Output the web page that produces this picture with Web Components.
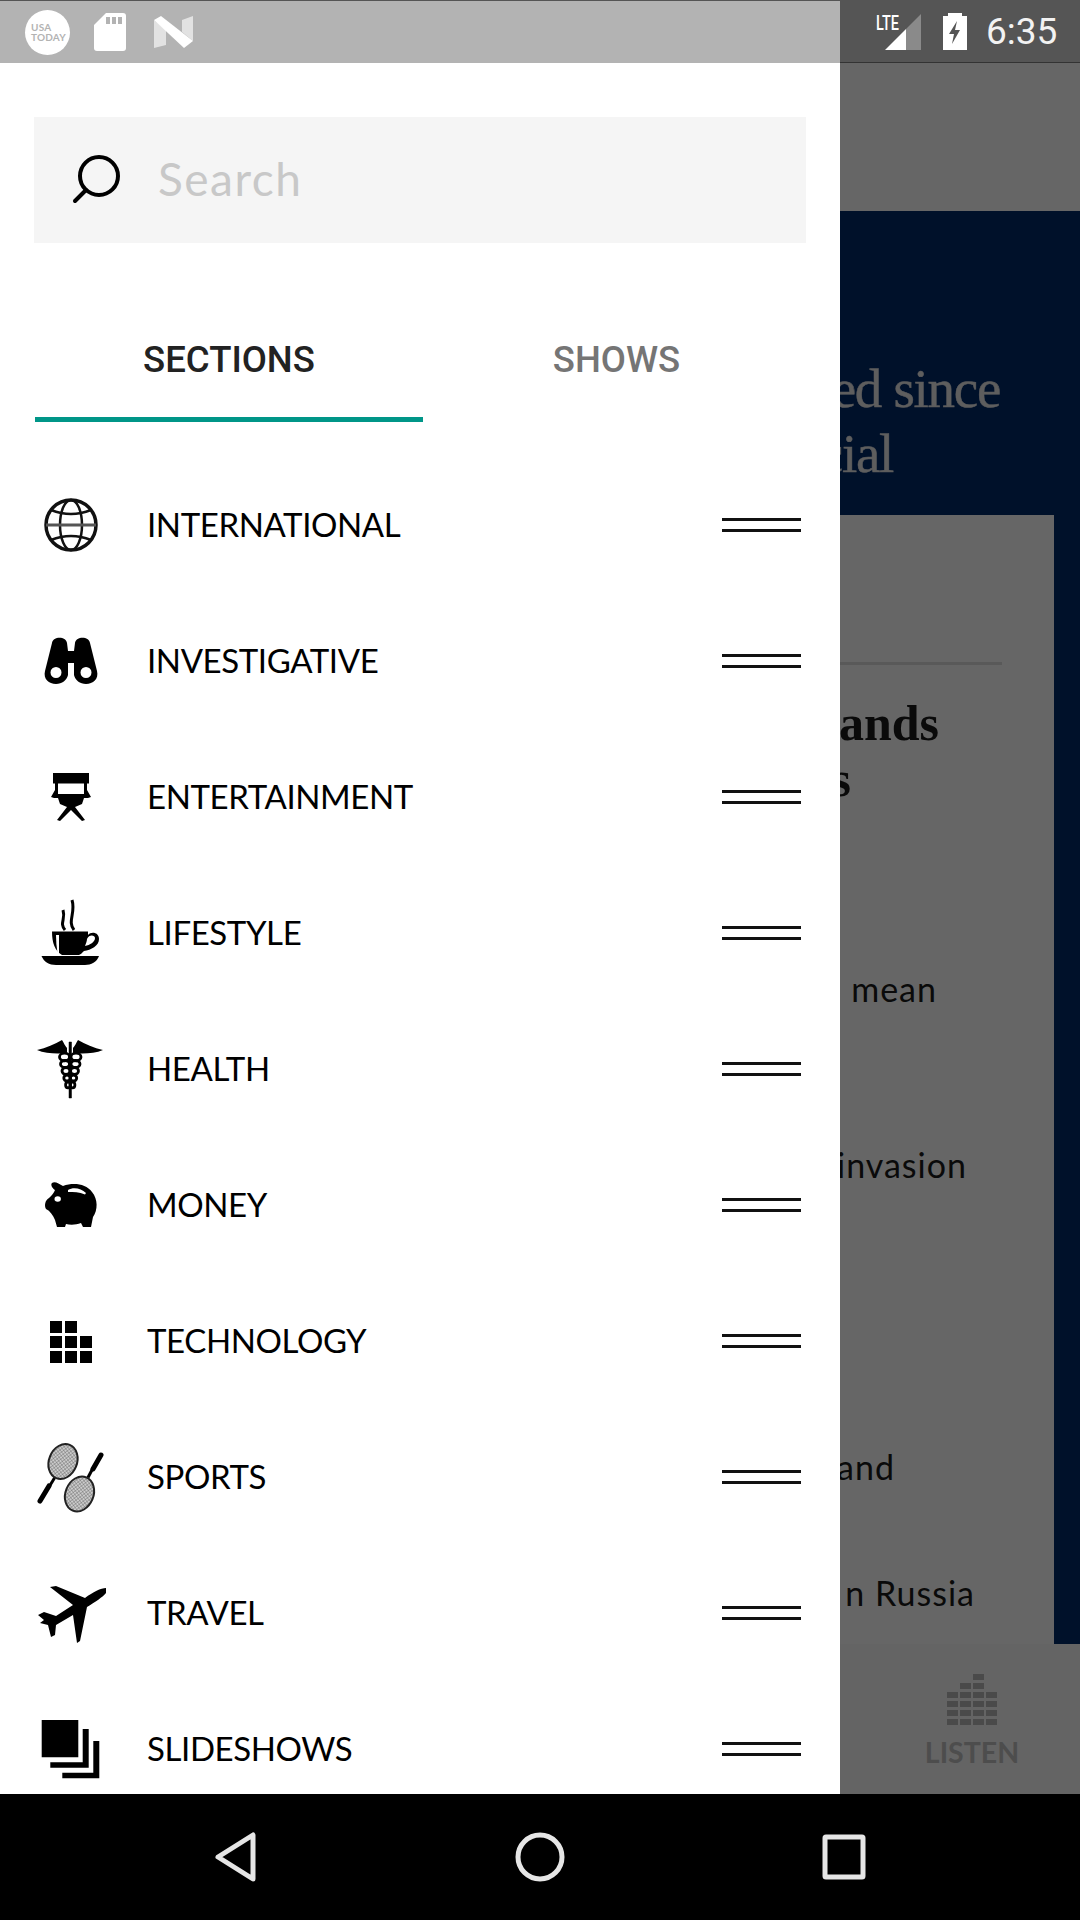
<!DOCTYPE html>
<html>
<head>
<meta charset="utf-8">
<style>
  html, body { margin: 0; background: #000; }
  body { font-family: "Lato", "Liberation Sans", sans-serif; }
  #screen { display: flex; flex-direction: column; width: 1080px; height: 1920px; overflow: hidden; }
  #middle { display: flex; height: 1731px; }
</style>
</head>
<body>
<div id="screen">
  <status-bar></status-bar>
  <div id="middle">
    <app-drawer>
      <section-row>
        <svg slot="icon" width="80" height="80" viewBox="0 0 80 80" fill="none" stroke="#111">
          <circle cx="40" cy="40" r="25" stroke-width="3.500"/>
          <ellipse cx="40" cy="40" rx="11" ry="25" stroke-width="2.500"/>
          <path d="M15 40H65" stroke-width="3" stroke="#555"/>
          <path d="M20 25Q40 33 60 25M20 55Q40 47 60 55" stroke-width="2.500"/>
        </svg>
        INTERNATIONAL
      </section-row>
      <section-row>
        <svg slot="icon" width="80" height="80" viewBox="0 0 80 80">
          <path fill-rule="evenodd" d="M21 22C22 15 35 15 36 22L37 30H43L44 22C45 15 58 15 59 22L66 50C68 58 62 63 55 63C49 63 44 59 43 54V42H37V54C36 59 31 63 25 63C18 63 12 58 14 50ZM25 46A5.500 5.500 0 1 0 25 57A5.500 5.500 0 1 0 25 46ZM55 46A5.500 5.500 0 1 0 55 57A5.500 5.500 0 1 0 55 46Z"/>
        </svg>
        INVESTIGATIVE
      </section-row>
      <section-row>
        <svg slot="icon" width="80" height="80" viewBox="0 0 80 80">
          <rect x="22" y="16" width="36" height="10.500"/>
          <path d="M24 26H27V37H53V26H56V33L60 40L57 41H53L51 47L44 50L54 63L51 64L40 53L29 64L26 63L36 50L29 47L27 41H23L20 40L24 33Z"/>
        </svg>
        ENTERTAINMENT
      </section-row>
      <section-row>
        <svg slot="icon" width="80" height="80" viewBox="0 0 80 80">
          <path d="M10.500 63H68C66 69 60 72 54 72H25C18 72 13 69 10.500 63Z"/>
          <path fill-rule="evenodd" d="M21 38.500H57V42C60 38 68 39 68 46C68 53 60 57 53 58C51 60 50 61 48 62H31C24 58 21 50 21 38.500ZM56 46C56 48 55 50 54 53C59 52 64 49 64 45C64 42 58 41 56 46Z"/>
          <path d="M25 42H28V60H26.500C25.500 54 25 48 25 42Z" fill="#fff"/>
          <path d="M34 37C28 30 35 26 32 17M43 37C36 28 45 20 41 7" fill="none" stroke="#000" stroke-width="3"/>
        </svg>
        LIFESTYLE
      </section-row>
      <section-row>
        <svg slot="icon" width="80" height="80" viewBox="0 0 80 80">
          <path d="M6 21C15 19 24 15 31 11C33 14 34 17 36 19V24C28 25 15 25 6 21ZM72 21C63 19 54 15 47 11C45 14 44 17 42 19V24C50 25 63 25 72 21Z"/>
          <path d="M38 13H40.500V69H38Z" stroke="#000" stroke-width=".5"/>
          <g fill="none" stroke="#000" stroke-width="2.800">
            <ellipse cx="33.500" cy="28" rx="5" ry="3.800"/>
            <ellipse cx="45" cy="28" rx="5" ry="3.800"/>
            <ellipse cx="34" cy="35" rx="4.500" ry="3.500"/>
            <ellipse cx="44.500" cy="35" rx="4.500" ry="3.500"/>
            <ellipse cx="35" cy="42" rx="4" ry="3.300"/>
            <ellipse cx="43.500" cy="42" rx="4" ry="3.300"/>
            <ellipse cx="36" cy="49" rx="3.200" ry="3"/>
            <ellipse cx="42.500" cy="49" rx="3.200" ry="3"/>
            <ellipse cx="37" cy="56" rx="2.400" ry="2.800"/>
            <ellipse cx="41.500" cy="56" rx="2.400" ry="2.800"/>
          </g>
        </svg>
        HEALTH
      </section-row>
      <section-row>
        <svg slot="icon" width="80" height="80" viewBox="0 0 80 80">
          <path d="M21 18C24 16 28 19 32 21C43 17 55 19 61 27C67 34 67 45 62 52L60 62H52L50 58C45 60 39 60 35 59L34 62H26L24 55C22 50 19 46 15 44C13 41 14 35 18 33C21 30 23 28 24 25C22 24 19 20 21 18Z"/>
          <ellipse cx="26.700" cy="34" rx="3.200" ry="2.800" fill="#fff"/>
          <path d="M37 25C42 22 50 23 55 28L54 29.500C48 27 43 27 37 27Z" fill="#fff"/>
        </svg>
        MONEY
      </section-row>
      <section-row>
        <svg slot="icon" width="80" height="80" viewBox="0 0 80 80">
          <path d="M19 20H31V32H19ZM34 20H46V32H34ZM19 35H31V47H19ZM34 35H46V47H34ZM49 35H61V47H49ZM19 50H31V62H19ZM34 50H46V62H34ZM49 50H61V62H49Z"/>
        </svg>
        TECHNOLOGY
      </section-row>
      <section-row>
        <svg slot="icon" width="80" height="80" viewBox="0 0 80 80">
          <defs>
            <pattern id="mesh" width="2.600" height="2.600" patternUnits="userSpaceOnUse" patternTransform="rotate(30)">
              <rect width="2.600" height="2.600" fill="#ccc"/>
              <path d="M0 0H2.600M0 0V2.600" stroke="#666" stroke-width=".8"/>
            </pattern>
          </defs>
          <ellipse cx="32" cy="24.500" rx="14" ry="18" transform="rotate(22 32 24.500)" fill="url(#mesh)" stroke="#222" stroke-width="2"/>
          <ellipse cx="48.500" cy="57" rx="14" ry="18" transform="rotate(22 48.500 57)" fill="url(#mesh)" stroke="#222" stroke-width="2"/>
          <path d="M23.500 41L18 50" stroke="#000" stroke-width="3"/>
          <path d="M18 49L9 64" stroke="#000" stroke-width="5" stroke-linecap="round"/>
          <path d="M57 40.500L62 31" stroke="#000" stroke-width="3"/>
          <path d="M62 32L70 18" stroke="#000" stroke-width="5" stroke-linecap="round"/>
        </svg>
        SPORTS
      </section-row>
      <section-row>
        <svg slot="icon" width="80" height="80" viewBox="0 0 80 80">
          <path d="M75 15C70 15 62 19 54 25L25 13L19 14L42 32L25 43L13 39L7 42L13 47L9 50L17 52L20 64L24 62L25 52L42 42L46 70L49 68L56 34C64 29 72 24 75 20Z"/>
        </svg>
        TRAVEL
      </section-row>
      <section-row>
        <svg slot="icon" width="80" height="80" viewBox="0 0 80 80">
          <path d="M10.700 11H47.300V48.300H10.700ZM51.700 20H57.700V58.700H19.300V53.300H51.700ZM62.300 32H68.300V69.300H31.300V63.700H62.300Z"/>
        </svg>
        SLIDESHOWS
      </section-row>
    </app-drawer>
    <news-peek></news-peek>
  </div>
  <nav-bar></nav-bar>
</div>

<script>
/**
 * Small helper, every element below has its markup in an open shadow root
 */
class ShadowElement extends HTMLElement {
    constructor() {
        super();
        this.attachShadow({ mode: 'open' });
    }

    connectedCallback() {
        this.shadowRoot.innerHTML = this.markup();
    }
}

class StatusBar extends ShadowElement {
    markup() {
        return `
        <style>
            :host { display: flex; height: 63px; flex: none; background: #555; border-top: 1px solid #555; box-sizing: border-box; }
            .left { display: flex; align-items: center; width: 840px; background: #b3b3b3; padding-left: 25px; gap: 24px; box-sizing: border-box; }
            .usa {
                display: flex; flex-direction: column; justify-content: center; box-sizing: border-box;
                width: 45px; height: 45px; border-radius: 50%; background: #fff; padding-left: 6px;
                font: 700 10px/10px "Lato", sans-serif; letter-spacing: .2px; color: #b3b3b3;
            }
            .right { display: flex; flex: 1; align-items: center; padding-left: 36px; border-bottom: 1px solid #333; }
            .time { margin-left: 19px; font: 400 37px "Roboto", sans-serif; color: #f2f2f2; }
            svg { display: block; flex: none; }
        </style>
        <div class="left">
            <div class="usa"><span>USA</span><span>TODAY</span></div>
            <svg width="32" height="38" viewBox="0 0 32 38">
                <path d="M12 0H29C31 0 32 1 32 3V35C32 37 31 38 29 38H3C1 38 0 37 0 35V12Z" fill="#fff"/>
                <path d="M12 4H16V11H12ZM18 4H22V11H18ZM24 4H28V11H24Z" fill="#b3b3b3"/>
            </svg>
            <svg width="40" height="32" viewBox="0 0 40 32" style="margin-left:4px">
                <path d="M0 4L12 14V29L0 32Z" fill="#e2e2e2"/>
                <path d="M28 16V4L39 0V25Z" fill="#e2e2e2"/>
                <path d="M0 4L7 0L39 25L30 32Z" fill="#fff"/>
            </svg>
        </div>
        <div class="right">
            <svg width="46" height="38" viewBox="0 0 46 38">
                <text x="0" y="17" font-family="Roboto" font-weight="500" font-size="21" fill="#fff" textLength="23" lengthAdjust="spacingAndGlyphs">LTE</text>
                <path d="M9 37L30 16V37Z" fill="#fff"/>
                <path d="M30 16L45 1V37H30Z" fill="#8a8a8a"/>
            </svg>
            <svg width="24" height="37" viewBox="0 0 24 37" style="margin-left:21px">
                <path d="M5 0H19V3H24V37H0V3H5Z" fill="#fff"/>
                <path d="M14 8L6 21H11L9 31L17 17H12Z" fill="#555"/>
            </svg>
            <span class="time">6:35</span>
        </div>
        `;
    }
}

class SearchBox extends ShadowElement {
    markup() {
        return `
        <style>
            :host { display: flex; align-items: center; height: 126px; margin: 54px 34px 0; background: #f5f5f5; }
            svg { margin-left: 38px; flex: none; }
            span { margin-left: 36px; padding-bottom: 4px; font: 400 46px "Lato", sans-serif; letter-spacing: 1.500px; color: #c8c8c8; }
        </style>
        <svg width="50" height="50" viewBox="0 0 50 50" fill="none" stroke="#000" stroke-width="4" stroke-linecap="round">
            <circle cx="27" cy="21" r="19"/>
            <path d="M14 35L3 46"/>
        </svg>
        <span>Search</span>
        `;
    }
}

class DrawerTabs extends ShadowElement {
    markup() {
        return `
        <style>
            :host { display: grid; grid-template-columns: 388px 387px; margin-left: 35px; font: 500 36.500px "Roboto", sans-serif; }
            div { display: flex; align-items: center; justify-content: center; height: 179px; padding-top: 58px; box-sizing: border-box; border-bottom: 5px solid transparent; color: #757575; }
            .on { color: #222; border-bottom-color: #009688; }
        </style>
        <div class="on">SECTIONS</div>
        <div>SHOWS</div>
        `;
    }
}

class SectionRow extends ShadowElement {
    markup() {
        return `
        <style>
            :host { display: flex; flex: none; align-items: center; height: 136px; padding: 0 39px 0 31px; font: 400 33px "Lato", sans-serif; color: #000; }
            ::slotted(svg) { display: block; flex: none; }
            .label { flex: 1; margin-left: 36px; padding-bottom: 2px; white-space: nowrap; letter-spacing: -.4px; }
            .grip { flex: none; width: 79px; height: 14px; border-top: 3px solid #111; border-bottom: 3px solid #111; box-sizing: border-box; }
        </style>
        <slot name="icon"></slot>
        <div class="label"><slot></slot></div>
        <div class="grip"></div>
        `;
    }
}

class AppDrawer extends ShadowElement {
    markup() {
        return `
        <style>
            :host { display: block; flex: none; width: 840px; height: 1731px; overflow: hidden; background: #fff; }
            .list { display: flex; flex-direction: column; margin-top: 35px; }
        </style>
        <search-box></search-box>
        <drawer-tabs></drawer-tabs>
        <div class="list"><slot></slot></div>
        `;
    }
}

// what is left of the article on the right of the open drawer
class NewsPeek extends ShadowElement {
    markup() {
        const bars = [[0, 0, 1, 0], [0, 1, 1, 0], [1, 1, 1, 1], [1, 1, 1, 1], [1, 1, 1, 1], [1, 1, 1, 1]]
            .flat().map(on => `<i style="opacity:${on}"></i>`).join('');
        return `
        <style>
            :host { display: flex; flex-direction: column; flex: 1; min-width: 0; overflow: hidden; background: #666; }
            .appbar { height: 148px; flex: none; background: #666; }
            .hero { display: flex; flex-direction: column; align-items: flex-end; height: 304px; flex: none; background: #00112a; font: 400 55px/65px "Liberation Serif", serif; letter-spacing: -1.300px; -webkit-text-stroke: .5px #5e5e5e; color: #5e5e5e; }
            .hero div { white-space: nowrap; }
            .body { display: flex; flex: 1; min-height: 0; background: #00112a; }
            .card { display: flex; flex-direction: column; align-items: flex-end; flex: 1; min-width: 0; overflow: hidden; background: #666; font: 400 34px/40px "Lato", sans-serif; letter-spacing: 1px; color: #0a0a0a; }
            .card div { white-space: nowrap; }
            .rule { align-self: stretch; height: 3px; margin: 147px 52px 0 0; background: #595959; }
            .big { font: 700 50px/56px "Liberation Serif", serif; letter-spacing: 0; color: #0a0a0a; }
            .strip { width: 26px; flex: none; }
            .listen { display: flex; flex-direction: column; align-items: center; height: 150px; flex: none; box-sizing: border-box; padding: 30px 0 0 24px; background: #646464; color: #4d4d4d; font: 700 28.500px "Lato", sans-serif; }
            .bars { display: grid; grid-template-columns: repeat(4, 11px); grid-auto-rows: 6px; gap: 3px 2px; margin-bottom: 10px; }
            .bars i { background: #4a4a4a; }
        </style>
        <div class="appbar"></div>
        <div class="hero">
            <div style="margin:145px 80px 0 0">ized since</div>
            <div style="margin-right:187px">cial</div>
        </div>
        <div class="body">
            <div class="card">
                <div class="rule"></div>
                <div class="big" style="margin:30px 115px 0 0">ands</div>
                <div class="big" style="margin-right:203px">es</div>
                <div style="margin:162px 117px 0 0">mean</div>
                <div style="margin:136px 87px 0 0">invasion</div>
                <div style="margin:262px 159px 0 0">and</div>
                <div style="margin:86px 79px 0 0">n Russia</div>
            </div>
            <div class="strip"></div>
        </div>
        <div class="listen">
            <div class="bars">${bars}</div>
            <span>LISTEN</span>
        </div>
        `;
    }
}

class NavBar extends ShadowElement {
    markup() {
        return `
        <style>
            :host { display: flex; flex: none; align-items: center; justify-content: center; gap: 244px; height: 126px; background: #000; }
            svg { display: block; }
        </style>
        <svg width="60" height="60" viewBox="0 0 60 60" fill="none" stroke="#e6e6e6" stroke-width="5" stroke-linejoin="round">
            <path d="M47 8V52L12 30Z"/>
        </svg>
        <svg width="60" height="60" viewBox="0 0 60 60" fill="none" stroke="#e6e6e6" stroke-width="5">
            <circle cx="30" cy="30" r="22"/>
        </svg>
        <svg width="60" height="60" viewBox="0 0 60 60" fill="none" stroke="#e6e6e6" stroke-width="5" stroke-linejoin="round">
            <rect x="11" y="10" width="38" height="40" rx="1"/>
        </svg>
        `;
    }
}

customElements.define('status-bar', StatusBar);
customElements.define('search-box', SearchBox);
customElements.define('drawer-tabs', DrawerTabs);
customElements.define('section-row', SectionRow);
customElements.define('app-drawer', AppDrawer);
customElements.define('news-peek', NewsPeek);
customElements.define('nav-bar', NavBar);
</script>
</body>
</html>
